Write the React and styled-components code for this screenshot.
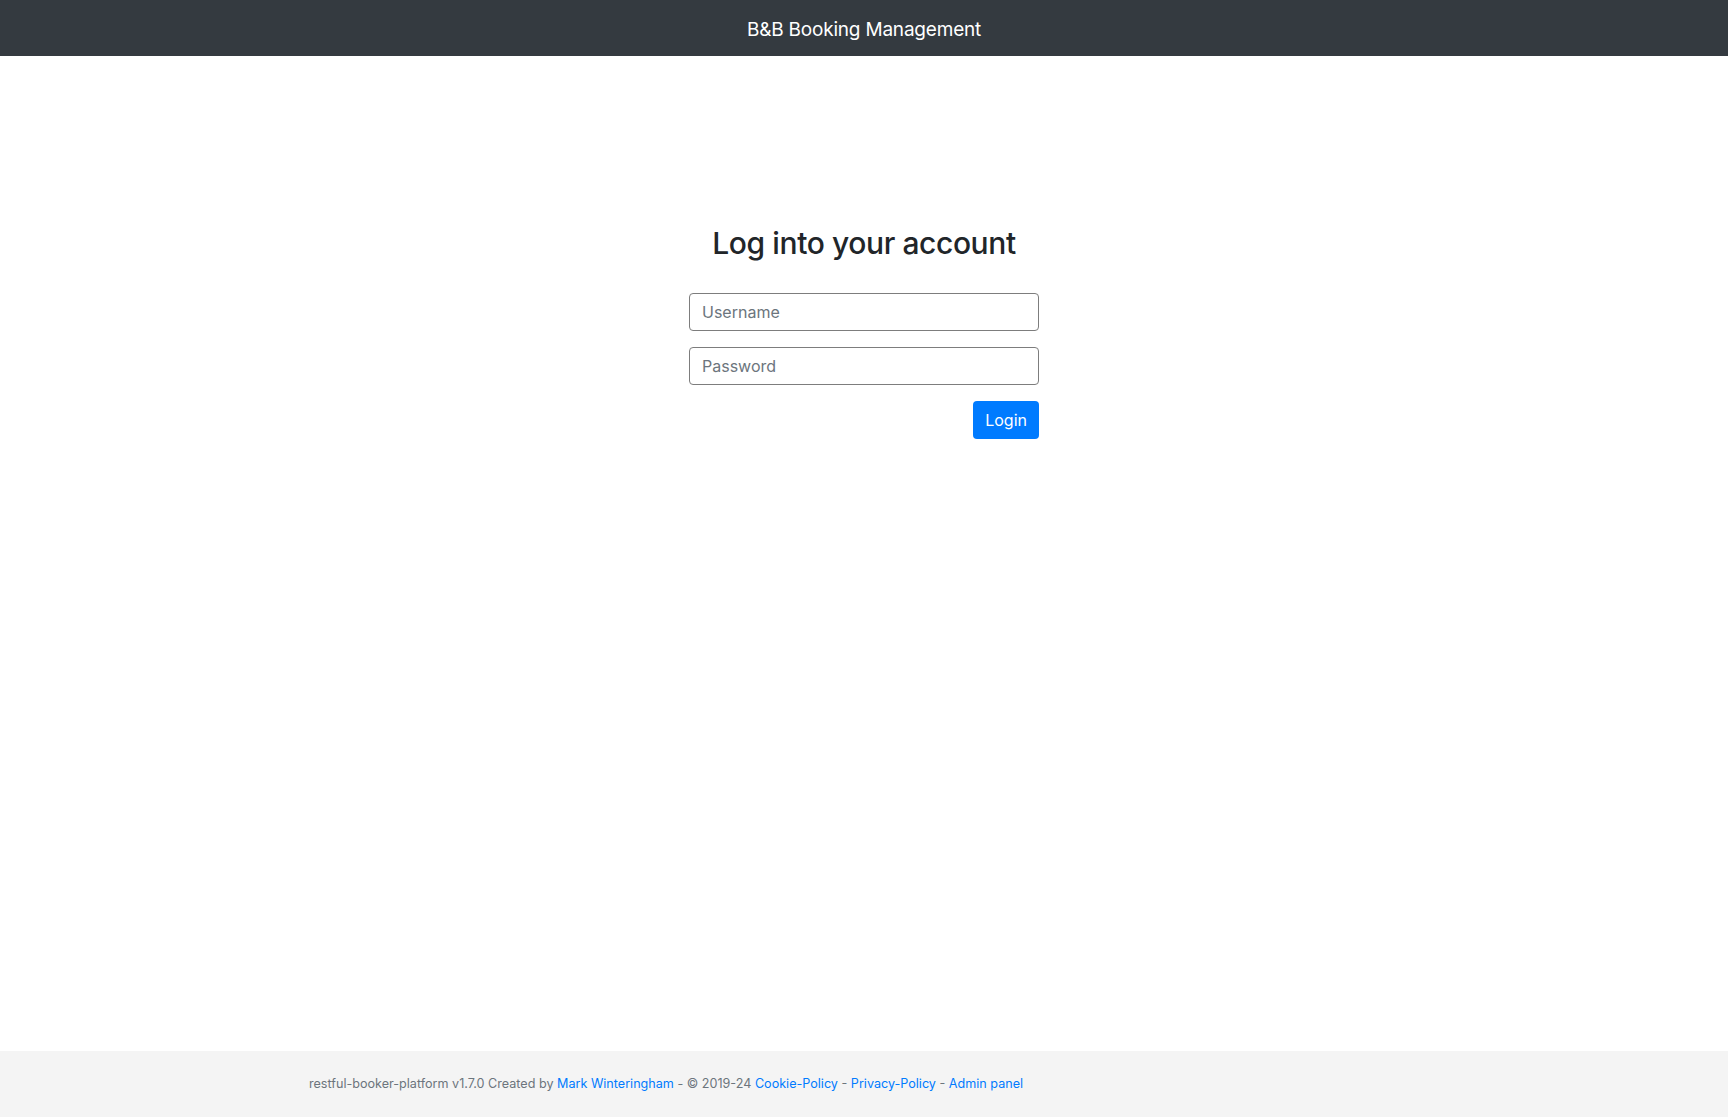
import React from 'react';
import styled, { createGlobalStyle } from 'styled-components';

const GlobalStyle = createGlobalStyle`
  * { box-sizing: border-box; }
  html, body { margin: 0; padding: 0; }
  body {
    font-family: Inter, "Liberation Sans", Arial, sans-serif;
    font-size: 16px;
    line-height: 1.5;
    color: #212529;
    background: #fff;
  }
`;

const Page = styled.div`
  min-height: 100vh;
  display: flex;
  flex-direction: column;
`;

const NavBar = styled.nav`
  height: 56px;
  padding-top: 3px;
  background: #343a40;
  display: flex;
  align-items: center;
  justify-content: center;
`;

const Brand = styled.span`
  color: #fff;
  font-size: 19px;
  line-height: 1;
  letter-spacing: -0.2px;
`;

const Main = styled.main`
  flex: 1;
  display: flex;
  justify-content: center;
  padding-top: 169px;
`;

const LoginForm = styled.form`
  width: 350px;
  display: flex;
  flex-direction: column;
`;

const Title = styled.h2`
  margin: 0 0 32px;
  font-size: 30px;
  font-weight: 500;
  line-height: 1.2;
  text-align: center;
  letter-spacing: -0.4px;
`;

const Field = styled.input`
  height: 38px;
  width: 100%;
  margin-bottom: 16px;
  padding: 6px 12px;
  font-family: inherit;
  font-size: 16px;
  color: #495057;
  border: 1px solid #7d7d7d;
  border-radius: 4px;
  outline: none;

  &::placeholder {
    color: #6c757d;
  }
`;

const Actions = styled.div`
  display: flex;
  justify-content: flex-end;
`;

const Button = styled.button`
  height: 38px;
  padding: 0 12px;
  font-family: inherit;
  font-size: 16px;
  color: #fff;
  background: ${p => (p.$variant === 'primary' ? '#007bff' : '#6c757d')};
  border: none;
  border-radius: 4px;
  cursor: pointer;
`;

const Footer = styled.footer`
  height: 66px;
  background: #f4f4f4;
  display: flex;
  align-items: center;
`;

const Container = styled.div`
  width: 1140px;
  margin: 0 auto;
  padding: 0 15px;
`;

const FooterText = styled.p`
  margin: 0;
  font-size: 12.6px;
  color: #6c757d;
`;

const FooterLink = styled.a`
  color: #007bff;
  text-decoration: none;
`;

const App = () => {
  return (
    <Page>
      <GlobalStyle />
      <NavBar>
        <Brand>B&amp;B Booking Management</Brand>
      </NavBar>

      <Main>
        <LoginForm onSubmit={e => e.preventDefault()}>
          <Title>Log into your account</Title>
          <Field type="text" placeholder="Username" />
          <Field type="password" placeholder="Password" />
          <Actions>
            <Button type="submit" $variant="primary">Login</Button>
          </Actions>
        </LoginForm>
      </Main>

      <Footer>
        <Container>
          <FooterText>
            restful-booker-platform v1.7.0 Created by{' '}
            <FooterLink href="#">Mark Winteringham</FooterLink> - © 2019-24{' '}
            <FooterLink href="#">Cookie-Policy</FooterLink> -{' '}
            <FooterLink href="#">Privacy-Policy</FooterLink> -{' '}
            <FooterLink href="#">Admin panel</FooterLink>
          </FooterText>
        </Container>
      </Footer>
    </Page>
  );
};

export default App;
